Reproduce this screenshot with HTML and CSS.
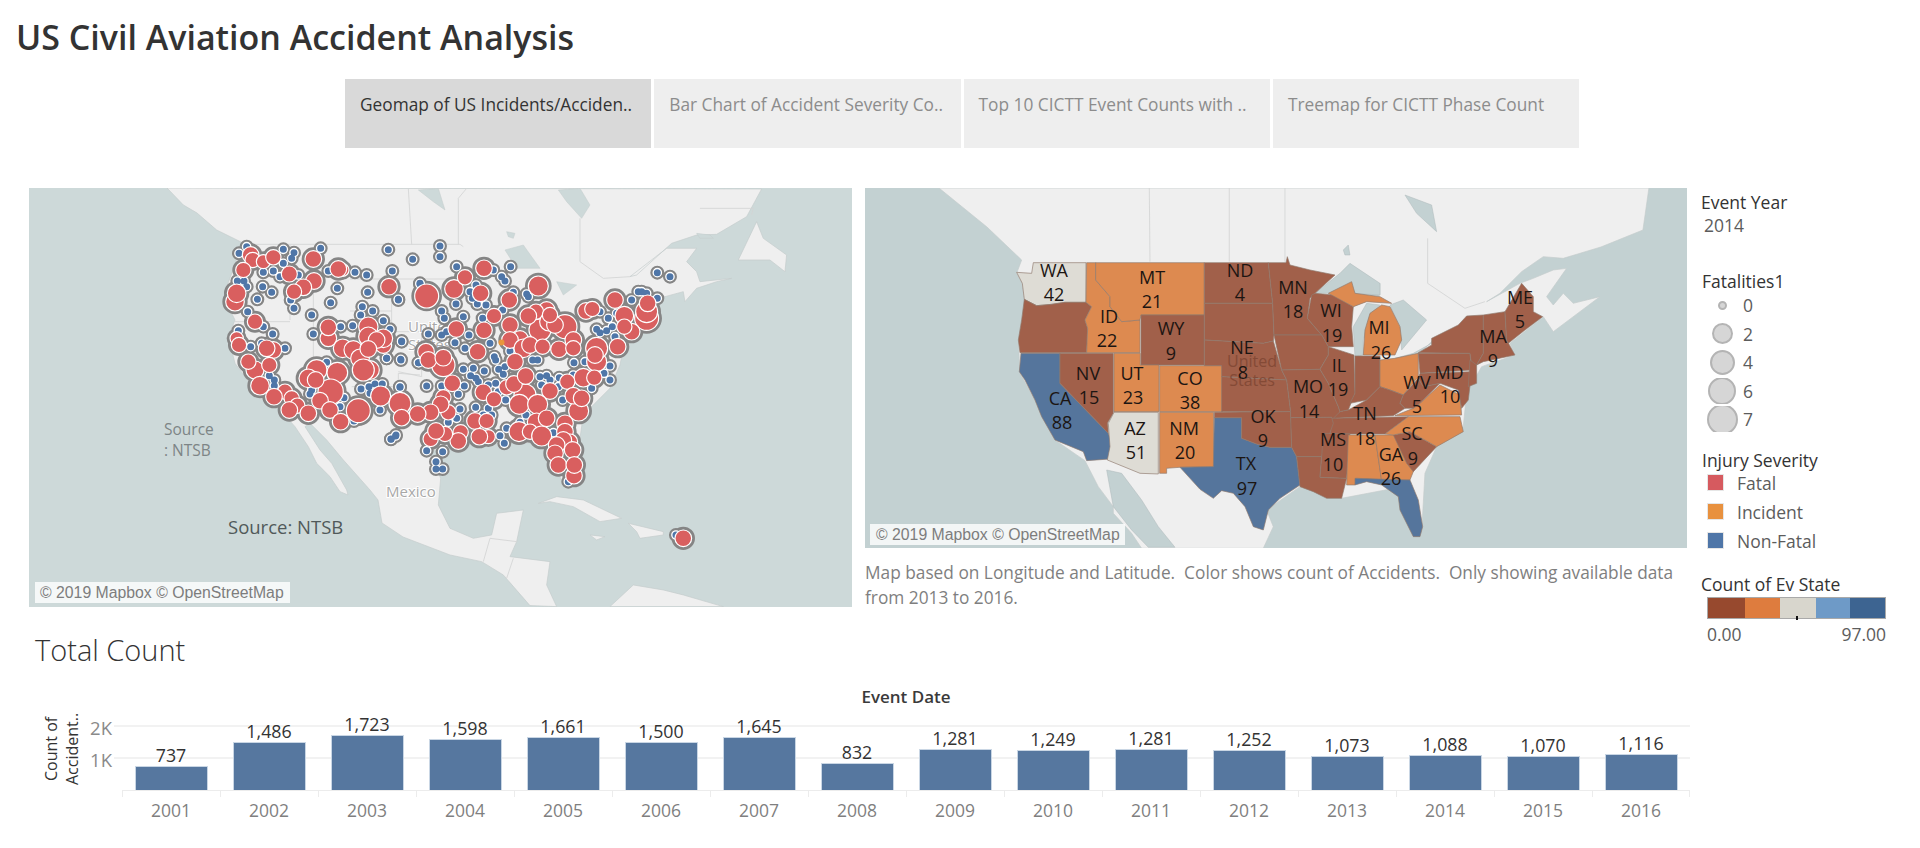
FILE: index.html
```html
<!DOCTYPE html>
<html lang="en">
<head>
<meta charset="utf-8">
<title>US Civil Aviation Accident Analysis</title>
<link rel="stylesheet" href="styles.css">
</head>
<body>
<div class="page">
  <h1 class="title">US Civil Aviation Accident Analysis</h1>
  <nav class="tabs">
    <div class="tab active">Geomap of US Incidents/Acciden..</div>
    <div class="tab">Bar Chart of Accident Severity Co..</div>
    <div class="tab">Top 10 CICTT Event Counts with ..</div>
    <div class="tab">Treemap for CICTT Phase Count</div>
  </nav>

  <section class="top">
    <div class="map map-one">
      <svg class="map-svg" viewBox="29 188 823 419" aria-label="Map of incidents">
        <defs>
          <path id="b7" transform="translate(220 230) scale(.3333)" d="M80 50h0M57 70h0M190 58h0M222 68h0M215 85h0M302 55h0M505 59h0M660 48h0M660 80h0M578 88h0M130 127h0M160 123h0M190 100h0M180 140h0M235 135h0M128 170h0M155 187h0M112 208h0M52 153h0M72 153h0M80 170h0M212 210h0M222 235h0M275 255h0M83 245h0M55 302h0M130 290h0M158 312h0M195 355h0M92 350h0M125 340h0M148 437h0M163 450h0M163 467h0M352 175h0M443 187h0M332 218h0M427 230h0M458 243h0M422 255h0M490 272h0M510 298h0M398 287h0M362 290h0M280 312h0M325 123h0M405 127h0M440 135h0M517 123h0M535 208h0M600 160h0M545 335h0M543 390h0M500 385h0M597 398h0M540 470h0M423 477h0M447 470h0M465 462h0M487 462h0M450 490h0M270 492h0M275 480h0M320 397h0M372 503h0M360 530h0M480 540h0M402 573h0M513 628h0M527 618h0"/>
          <path id="b12" transform="translate(350 185) scale(.3333)" d="M210 297h0M320 245h0M482 245h0M430 255h0M455 275h0M465 288h0M145 345h0M155 468h0M110 520h0M152 523h0M205 533h0M275 378h0M283 400h0M340 395h0M357 450h0M235 447h0M290 440h0M275 450h0M315 473h0M345 490h0M433 515h0M437 525h0M398 400h0M458 375h0M420 475h0M340 553h0M370 550h0M403 558h0M378 580h0M362 572h0M385 590h0M343 603h0M275 603h0M230 603h0M150 607h0M325 628h0M330 672h0M377 667h0M415 670h0M425 690h0M400 690h0M320 700h0M295 712h0M230 797h0M278 800h0M258 830h0M258 852h0M278 852h0M123 762h0M138 750h0M463 775h0M450 752h0M470 730h0M510 712h0M548 525h0M563 525h0M480 498h0M446 553h0M465 545h0M460 568h0M415 600h0M437 595h0M445 620h0M467 645h0M570 575h0M590 572h0M575 600h0M600 585h0M628 578h0M625 605h0M672 533h0M705 530h0M670 570h0M638 645h0M725 610h0M762 565h0M780 543h0M780 585h0M740 433h0M770 437h0M750 443h0M795 455h0M775 400h0M845 345h0M865 320h0M875 320h0M890 325h0M922 340h0M922 263h0M960 275h0M800 385h0M787 425h0M610 743h0M655 890h0M978 1050h0M750 380h0M530 327h0M535 335h0M490 322h0M360 320h0M378 300h0M367 340h0M382 357h0M408 360h0M318 357h0M528 690h0"/>
          <g id="r7" transform="translate(220 230) scale(.3333)">
            <circle cx="92" cy="75" r="25"/><circle cx="98" cy="90" r="23"/><circle cx="70" cy="120" r="23"/><circle cx="130" cy="95" r="21"/><circle cx="160" cy="82" r="23"/><circle cx="208" cy="132" r="24"/><circle cx="280" cy="87" r="25"/><circle cx="282" cy="153" r="25"/><circle cx="250" cy="172" r="25"/><circle cx="222" cy="185" r="23"/><circle cx="368" cy="120" r="19"/><circle cx="355" cy="117" r="25"/><circle cx="45" cy="215" r="28"/><circle cx="50" cy="190" r="28"/><circle cx="105" cy="275" r="23"/><circle cx="50" cy="325" r="20"/><circle cx="57" cy="345" r="23"/><circle cx="160" cy="360" r="25"/><circle cx="140" cy="355" r="25"/><circle cx="105" cy="420" r="27"/><circle cx="85" cy="395" r="23"/><circle cx="148" cy="405" r="23"/><circle cx="120" cy="467" r="28"/><circle cx="195" cy="485" r="23"/><circle cx="162" cy="500" r="25"/><circle cx="215" cy="505" r="23"/><circle cx="232" cy="527" r="23"/><circle cx="208" cy="540" r="25"/><circle cx="265" cy="550" r="25"/><circle cx="325" cy="325" r="25"/><circle cx="325" cy="292" r="25"/><circle cx="368" cy="355" r="28"/><circle cx="400" cy="360" r="28"/><circle cx="445" cy="290" r="29"/><circle cx="445" cy="320" r="29"/><circle cx="490" cy="345" r="25"/><circle cx="490" cy="325" r="28"/><circle cx="470" cy="330" r="25"/><circle cx="420" cy="385" r="28"/><circle cx="445" cy="357" r="25"/><circle cx="450" cy="420" r="28"/><circle cx="430" cy="420" r="33"/><circle cx="290" cy="420" r="31"/><circle cx="265" cy="445" r="28"/><circle cx="352" cy="428" r="31"/><circle cx="332" cy="485" r="38"/><circle cx="287" cy="450" r="25"/><circle cx="300" cy="512" r="25"/><circle cx="330" cy="540" r="25"/><circle cx="415" cy="542" r="36"/><circle cx="362" cy="575" r="25"/><circle cx="482" cy="498" r="30"/>
          </g>
          <g id="r12" transform="translate(350 185) scale(.3333)">
            <circle cx="117" cy="305" r="25"/><circle cx="230" cy="333" r="36"/><circle cx="312" cy="312" r="28"/><circle cx="345" cy="277" r="23"/><circle cx="402" cy="250" r="25"/><circle cx="392" cy="325" r="25"/><circle cx="478" cy="345" r="25"/><circle cx="432" cy="393" r="23"/><circle cx="565" cy="303" r="30"/><circle cx="319" cy="432" r="25"/><circle cx="402" cy="436" r="25"/><circle cx="383" cy="500" r="25"/><circle cx="480" cy="420" r="25"/><circle cx="645" cy="425" r="36"/><circle cx="570" cy="435" r="33"/><circle cx="590" cy="375" r="25"/><circle cx="558" cy="380" r="23"/><circle cx="535" cy="393" r="25"/><circle cx="597" cy="410" r="28"/><circle cx="615" cy="420" r="25"/><circle cx="600" cy="390" r="23"/><circle cx="510" cy="462" r="25"/><circle cx="480" cy="465" r="25"/><circle cx="520" cy="490" r="28"/><circle cx="540" cy="480" r="25"/><circle cx="495" cy="530" r="25"/><circle cx="578" cy="485" r="23"/><circle cx="627" cy="493" r="25"/><circle cx="670" cy="465" r="25"/><circle cx="670" cy="490" r="23"/><circle cx="708" cy="378" r="25"/><circle cx="727" cy="372" r="23"/><circle cx="795" cy="345" r="25"/><circle cx="890" cy="400" r="36"/><circle cx="890" cy="380" r="33"/><circle cx="893" cy="355" r="25"/><circle cx="845" cy="440" r="25"/><circle cx="823" cy="392" r="28"/><circle cx="823" cy="425" r="23"/><circle cx="803" cy="485" r="25"/><circle cx="740" cy="530" r="30"/><circle cx="740" cy="490" r="33"/><circle cx="735" cy="510" r="25"/><circle cx="700" cy="578" r="28"/><circle cx="733" cy="578" r="23"/><circle cx="652" cy="590" r="23"/><circle cx="686" cy="678" r="30"/><circle cx="670" cy="632" r="25"/><circle cx="695" cy="640" r="25"/><circle cx="600" cy="618" r="25"/><circle cx="525" cy="630" r="33"/><circle cx="470" cy="607" r="23"/><circle cx="492" cy="597" r="25"/><circle cx="527" cy="573" r="25"/><circle cx="400" cy="622" r="25"/><circle cx="432" cy="643" r="23"/><circle cx="508" cy="658" r="30"/><circle cx="563" cy="658" r="30"/><circle cx="560" cy="712" r="28"/><circle cx="590" cy="700" r="25"/><circle cx="507" cy="740" r="30"/><circle cx="540" cy="740" r="23"/><circle cx="575" cy="753" r="30"/><circle cx="645" cy="715" r="25"/><circle cx="645" cy="740" r="25"/><circle cx="660" cy="770" r="23"/><circle cx="640" cy="765" r="25"/><circle cx="620" cy="780" r="25"/><circle cx="615" cy="805" r="25"/><circle cx="668" cy="795" r="25"/><circle cx="672" cy="872" r="25"/><circle cx="625" cy="840" r="25"/><circle cx="673" cy="840" r="25"/><circle cx="375" cy="708" r="25"/><circle cx="410" cy="708" r="23"/><circle cx="415" cy="755" r="21"/><circle cx="388" cy="755" r="25"/><circle cx="332" cy="742" r="23"/><circle cx="325" cy="768" r="25"/><circle cx="285" cy="747" r="23"/><circle cx="242" cy="762" r="23"/><circle cx="258" cy="738" r="25"/><circle cx="295" cy="682" r="23"/><circle cx="280" cy="637" r="23"/><circle cx="272" cy="658" r="25"/><circle cx="242" cy="682" r="25"/><circle cx="203" cy="687" r="25"/><circle cx="150" cy="655" r="33"/><circle cx="155" cy="698" r="25"/><circle cx="280" cy="540" r="35"/><circle cx="228" cy="500" r="25"/><circle cx="235" cy="525" r="25"/><circle cx="280" cy="518" r="25"/><circle cx="307" cy="595" r="25"/><circle cx="1000" cy="1060" r="25"/>
          </g>
        </defs>

        <g transform="translate(350 185) scale(.3333)">
          <path class="land" d="M-549 9L-500 60-459 84-400 135-327 171-345 240-370 305-375 345-345 405-365 455-345 535-315 575-280 625-210 675-165 725-125 785-100 835-60 875-30 920-6 930-10 915-55 835-90 795-135 725-120 715-70 765-20 825 60 915 84 945 96 1014 159 1056 300 1110 395 1130 460 1170 540 1262 620 1265 590 1200 600 1130 480 1115 500 1070 520 975 440 985 425 1050 370 1060 300 1030 265 960 272 880 240 800 320 775 400 780 480 770 560 775 590 800 640 895 690 880 690 760 700 690 780 610 810 540 830 440 920 420 890 350 1000 320 1005 350 1040 310 1100 290 1145 280 1050 290 1040 260 1010 230 1040 190 950 190 840 275 860 270 965 175 1040 150 1100 148 1190 95 1235 12Z"/>
          <path class="land" d="M1165 225L1220 110 1240 160 1310 210 1305 260 1260 225ZM565 955L620 935 700 945 815 1000 750 1010 670 965 600 950ZM835 1015L940 1040 940 1050 870 1060 860 1040ZM720 1050L765 1055 740 1065ZM780 1265L850 1200 940 1215 1000 1230 1120 1265Z"/>
          <path class="lake" d="M625 15L690 10 720 60 695 100 650 50ZM205 15L265 10 285 75 250 50ZM465 195L520 180 570 250 500 250ZM620 290L680 300 640 330ZM470 140L495 145 490 160 475 155ZM1040 145L1080 150 1090 160 1050 160Z"/>
          <path class="line" d="M-327 178L330 178 340 185M175 10L185 178M325 40L325 178M350 10L325 40M690 100L690 230 760 280 840 275M0 282L295 282M0 378L125 378M125 295L125 440M140 440L215 440 215 575 145 560M400 1130L420 1060 500 1070M490 1120L470 1180M1050 70L1210 70 1205 90"/>
          <path class="line" d="M-180 180L-180 405M-110 315L-110 520M-345 410L-180 410M-110 520L0 520M5 605L145 605 145 565 210 570"/>
        </g>

        <text class="map-name" x="408" y="332">United</text>
        <text class="map-name" x="408" y="350">States</text>
        <text class="map-name" x="386" y="497">Mexico</text>
        <text class="map-note" x="164" y="435">Source</text>
        <text class="map-note" x="164" y="456">: NTSB</text>
        <text class="map-source" x="228" y="534">Source: NTSB</text>

        <use href="#b7" class="blue-halo"/>
        <use href="#b12" class="blue-halo"/>
        <use href="#r7" class="red-halo"/>
        <use href="#r12" class="red-halo"/>
        <use href="#b7" class="blue-ring"/>
        <use href="#b12" class="blue-ring"/>
        <use href="#b7" class="blue-dot"/>
        <use href="#b12" class="blue-dot"/>
        <use href="#r7" class="red-dot"/>
        <use href="#r12" class="red-dot"/>
        <circle class="orange-dot" cx="501.500" cy="342.500" r="3"/>
      </svg>
      <div class="attribution attribution-one">© 2019 Mapbox © OpenStreetMap</div>
    </div>

    <div class="map-column">
      <div class="map map-two">
        <svg class="map-svg" viewBox="865 188 822 360" aria-label="Map of accident counts by state">
          <g transform="translate(865 240) scale(.3333)">
            <path class="land" d="M222 -156L366 -39 470 60 455 100 472 130 478 178 470 240 460 300 465 400 510 480 530 530 570 600 660 662 700 740 745 800 745 820 800 880 830 925 1195 925 1225 860 1205 810 1305 740 1430 775 1640 735 1670 880 1680 700 1715 620 1795 560 1805 460 1850 380 1950 345 1935 310 2035 230 2065 275 2205 170 2125 190 2095 160 2065 195 2045 170 2105 85 2065 90 2005 115 1965 130 1865 185 1905 160 1970 95 2035 50 2095 55 2208 21 2334 -30 2352 -156Z"/>
            <path class="gulf" d="M725 690L770 700 830 780 880 860 930 922 850 922 800 870 745 800Z"/>
            <path class="gulf" d="M1350 340L1425 260 1455 190 1545 130 1545 165 1465 200 1500 160 1405 160ZM1465 260L1505 190 1545 195 1515 225 1495 300 1495 345 1470 350ZM1575 195L1615 180 1685 240 1610 330 1605 260ZM1590 355L1645 340 1700 310 1780 260 1775 285 1705 300 1665 340ZM1435 30L1450 15 1455 45 1440 45Z"/>
            <path class="gulf" d="M1350 160L1425 100 1455 70 1545 130 1545 165 1470 160 1455 130 1395 160ZM1620 -135L1700 -105 1715 -25 1655 -80Z"/>
            <path class="line" d="M853 -156L855 65M1093 -156L1093 65M1260 -156L1260 65M1688 -5L1688 130 1800 205 1860 185"/>

            <path class="state beige" d="M505 68L663 68 663 187 600 187 560 193 515 197 478 178 472 130 455 97 500 100Z"/>
            <path class="state brown" d="M478 178L515 197 560 193 600 187 663 187 680 200 660 240 668 265 665 338 465 338 460 300 470 240Z"/>
            <path class="state blue" d="M468 340L585 340 585 430 730 580 740 610 735 657 665 662 655 635 570 600 530 530 510 480 480 420 463 395Z"/>
            <path class="state brown" d="M585 340L745 340 745 520 728 548 730 580 585 430Z"/>
            <path class="state orange" d="M665 68L692 68 692 120 735 170 735 200 770 245 825 240 825 338 665 338 668 265 660 240 680 200 663 187Z"/>
            <path class="state orange" d="M692 68L1018 68 1018 225 828 225 825 240 770 245 735 200 735 170 692 120Z"/>
            <path class="state brown" d="M828 225L1018 225 1018 375 828 375Z"/>
            <path class="state orange" d="M747 340L826 340 826 375 882 375 882 515 747 515Z"/>
            <path class="state orange" d="M884 377L1072 377 1072 515 884 515Z"/>
            <path class="state beige" d="M747 517L880 517 880 702 825 700 727 660 735 620 730 550Z"/>
            <path class="state orange" d="M884 517L1046 517 1046 680 945 682 905 685 905 700 884 700Z"/>
          </g>
          <g transform="translate(1200 240) scale(.3333)">
            <path class="state blue" d="M43 533L125 533 125 595 170 612 210 622 275 622 290 650 300 735 240 775 205 810 190 870 160 860 135 800 100 760 65 752 40 775 0 748 -60 682 40 680Z"/>
            <path class="state brown" d="M13 68L205 68 218 190 13 190Z"/>
            <path class="state brown" d="M13 190L218 190 222 285 220 303 190 310 13 300Z"/>
            <path class="state brown" d="M13 300L190 310 220 303 245 390 260 420 65 410 65 377 13 377Z"/>
            <path class="state brown" d="M65 410L260 420 272 515 65 515Z"/>
            <path class="state brown" d="M43 517L272 515 275 622 210 622 170 612 125 595 125 533 43 533Z"/>
            <path class="state brown" d="M205 68L258 68 262 50 270 75 330 90 405 105 345 160 330 175 322 235 365 285 222 285 218 190Z"/>
            <path class="state brown" d="M335 165L345 160 400 165 460 200 455 260 460 320 385 320 365 285 322 235Z"/>
            <path class="state brown" d="M222 285L365 285 385 320 385 345 360 388 245 390Z"/>
            <path class="state brown" d="M245 390L360 388 385 430 415 500 420 515 400 550 395 532 272 533 272 515 260 420Z"/>
            <path class="state brown" d="M385 320L462 345 465 460 445 510 420 515 415 500 385 430 360 388 385 345Z"/>
            <path class="state brown" d="M465 348L540 348 540 440 500 480 450 490 465 460Z"/>
            <path class="state orange" d="M490 345L495 270 510 220 545 195 570 200 600 260 605 300 585 345Z"/>
            <path class="state orange" d="M385 160L455 125 465 160 540 170 575 190 500 185 460 200Z"/>
            <path class="state orange" d="M540 360L585 355 655 340 655 410 610 465 570 450 540 440Z"/>
            <path class="state brown" d="M420 515L445 510 500 480 540 440 570 450 610 465 600 490 615 505 580 527 400 535Z"/>
            <path class="state brown" d="M395 535L625 530 555 582 405 582 390 580Z"/>
            <path class="state brown" d="M272 533L395 532 400 550 365 650 290 650 275 622Z"/>
            <path class="state brown" d="M290 650L365 650 360 712 440 715 425 775 380 775 340 755 300 740Z"/>
            <path class="state brown" d="M370 580L450 582 440 715 360 712 365 650Z"/>
            <path class="state orange" d="M445 585L525 585 545 720 470 715 465 735 440 735Z"/>
            <path class="state orange" d="M525 585L580 585 650 670 630 720 545 725Z"/>
            <path class="state brown" d="M580 585L630 575 710 620 640 695 620 670Z"/>
            <path class="state orange" d="M555 582L625 530 780 530 790 575 710 620 630 575 580 585Z"/>
            <path class="state orange" d="M585 527L640 505 660 490 720 435 780 465 785 525Z"/>
            <path class="state brown" d="M610 465L655 415 670 440 720 430 660 490 640 505 615 505 600 490Z"/>
            <path class="state brown" d="M655 340L810 340 815 390 660 400Z"/>
            <path class="state brown" d="M660 400L815 395 805 480 785 505 775 450 720 430 670 440 655 415Z"/>
            <path class="state brown" d="M655 338L695 315 695 295 775 255 800 228 850 225 850 340 830 375 815 375 810 340Z"/>
            <path class="state brown" d="M810 360L830 375 830 430 805 440Z"/>
            <path class="state brown" d="M850 225L915 215 920 300 945 345 850 365 830 375 850 340Z"/>
            <path class="state brown" d="M915 215L965 130 1000 170 1000 215 1028 230 975 270 925 310 920 300Z"/>
            <path class="state blue" d="M465 715L630 720 655 780 668 860 660 890 640 890 600 810 595 770 545 735 500 725 465 735Z"/>
          </g>

          <text class="map-state-name" x="1252" y="367">United</text>
          <text class="map-state-name" x="1252" y="386">States</text>

          <g class="labels">
            <text x="1054" y="277">WA</text><text x="1054" y="301">42</text>
            <text x="1152" y="284">MT</text><text x="1152" y="308">21</text>
            <text x="1109" y="323">ID</text><text x="1107" y="347">22</text>
            <text x="1171" y="335">WY</text><text x="1171" y="360">9</text>
            <text x="1088" y="380">NV</text><text x="1089" y="404">15</text>
            <text x="1060" y="405">CA</text><text x="1062" y="429">88</text>
            <text x="1132" y="380">UT</text><text x="1133" y="404">23</text>
            <text x="1190" y="385">CO</text><text x="1190" y="409">38</text>
            <text x="1135" y="435">AZ</text><text x="1136" y="459">51</text>
            <text x="1184" y="435">NM</text><text x="1185" y="459">20</text>
            <text x="1240" y="277">ND</text><text x="1240" y="301">4</text>
            <text x="1293" y="294">MN</text><text x="1293" y="318">18</text>
            <text x="1331" y="317">WI</text><text x="1332" y="342">19</text>
            <text x="1242" y="354">NE</text><text x="1243" y="379">8</text>
            <text x="1379" y="334">MI</text><text x="1381" y="359">26</text>
            <text x="1520" y="304">ME</text><text x="1520" y="328">5</text>
            <text x="1493" y="343">MA</text><text x="1493" y="367">9</text>
            <text x="1339" y="372">IL</text><text x="1338" y="396">19</text>
            <text x="1308" y="393">MO</text><text x="1309" y="418">14</text>
            <text x="1263" y="423">OK</text><text x="1263" y="447">9</text>
            <text x="1246" y="470">TX</text><text x="1247" y="495">97</text>
            <text x="1333" y="446">MS</text><text x="1333" y="471">10</text>
            <text x="1365" y="420">TN</text><text x="1365" y="445">18</text>
            <text x="1449" y="379">MD</text><text x="1450" y="403">10</text>
            <text x="1417" y="389">WV</text><text x="1417" y="413">5</text>
            <text x="1412" y="440">SC</text><text x="1413" y="465">9</text>
            <text x="1391" y="461">GA</text><text x="1391" y="485">26</text>
          </g>
        </svg>
        <div class="attribution attribution-two">© 2019 Mapbox © OpenStreetMap</div>
      </div>
      <p class="caption">Map based on Longitude and Latitude.&nbsp; Color shows count of Accidents.&nbsp; Only showing available data<br>from 2013 to 2016.</p>
    </div>

    <aside class="legend">
      <h2 class="legend-title year-title">Event Year</h2>
      <div class="year-value">2014</div>

      <h2 class="legend-title fatal-title">Fatalities1</h2>
      <div class="size-list">
        <div class="size-row"><span class="size-slot"><i class="bubble b0"></i></span><span>0</span></div>
        <div class="size-row"><span class="size-slot"><i class="bubble b2"></i></span><span>2</span></div>
        <div class="size-row"><span class="size-slot"><i class="bubble b4"></i></span><span>4</span></div>
        <div class="size-row"><span class="size-slot"><i class="bubble b6"></i></span><span>6</span></div>
        <div class="size-row"><span class="size-slot"><i class="bubble b7"></i></span><span>7</span></div>
      </div>

      <h2 class="legend-title injury-title">Injury Severity</h2>
      <div class="swatch-list">
        <div class="swatch-row"><i class="swatch fatal"></i>Fatal</div>
        <div class="swatch-row"><i class="swatch incident"></i>Incident</div>
        <div class="swatch-row"><i class="swatch nonfatal"></i>Non-Fatal</div>
      </div>

      <h2 class="legend-title count-title">Count of Ev State</h2>
      <div class="ramp"><i class="r1"></i><i class="r2"></i><i class="r3"></i><i class="r4"></i><i class="r5"></i><b class="ramp-tick"></b></div>
      <div class="ramp-labels"><span>0.00</span><span>97.00</span></div>
    </aside>
  </section>

  <h2 class="total">Total Count</h2>
  <div class="axis-title">Event Date</div>
  <div class="chart">
    <div class="y-title">Count of<br>Accident..</div>
    <div class="y-axis"><span class="y2">2K</span><span class="y1">1K</span></div>
    <div class="plot">
      <i class="gridline g2"></i><i class="gridline g1"></i>
      <div class="col"><span>737</span><i class="bar" style="height:23.6px"></i></div>
      <div class="col"><span>1,486</span><i class="bar" style="height:47.6px"></i></div>
      <div class="col"><span>1,723</span><i class="bar" style="height:55.1px"></i></div>
      <div class="col"><span>1,598</span><i class="bar" style="height:51.1px"></i></div>
      <div class="col"><span>1,661</span><i class="bar" style="height:53.2px"></i></div>
      <div class="col"><span>1,500</span><i class="bar" style="height:48px"></i></div>
      <div class="col"><span>1,645</span><i class="bar" style="height:52.6px"></i></div>
      <div class="col"><span>832</span><i class="bar" style="height:26.6px"></i></div>
      <div class="col"><span>1,281</span><i class="bar" style="height:41px"></i></div>
      <div class="col"><span>1,249</span><i class="bar" style="height:40px"></i></div>
      <div class="col"><span>1,281</span><i class="bar" style="height:41px"></i></div>
      <div class="col"><span>1,252</span><i class="bar" style="height:40.1px"></i></div>
      <div class="col"><span>1,073</span><i class="bar" style="height:34.3px"></i></div>
      <div class="col"><span>1,088</span><i class="bar" style="height:34.8px"></i></div>
      <div class="col"><span>1,070</span><i class="bar" style="height:34.2px"></i></div>
      <div class="col"><span>1,116</span><i class="bar" style="height:35.7px"></i></div>
    </div>
  </div>
  <div class="years">
    <span>2001</span><span>2002</span><span>2003</span><span>2004</span><span>2005</span><span>2006</span><span>2007</span><span>2008</span><span>2009</span><span>2010</span><span>2011</span><span>2012</span><span>2013</span><span>2014</span><span>2015</span><span>2016</span>
  </div>
</div>
</body>
</html>
```
FILE: styles.css
```css
* { box-sizing: border-box; }
html, body { margin: 0; padding: 0; background: #fff; }
body { font-family: "Open Sans", "Noto Sans", sans-serif; color: #333; overflow: hidden; }
.page { width: 1920px; height: 848px; overflow: hidden; }

.title { margin: 0; height: 79px; padding: 16px 0 0 16px; font-size: 34px; line-height: 42px; font-weight: 600; color: #333; white-space: nowrap; }

.tabs { display: flex; gap: 3px; height: 69px; margin-left: 345px; }
.tab { width: 306.300px; height: 69px; padding: 13px 15px; font-size: 17.300px; line-height: 26px; white-space: nowrap; overflow: hidden; background: #eeeeee; color: #8c8c8c; }
.tab.active { background: #d9d9d9; color: #333; }

.top { display: flex; align-items: flex-start; gap: 13px; height: 419px; margin-top: 40px; padding-left: 29px; }
.map { position: relative; background: #cdd9d9; }
.map-one { width: 823px; height: 419px; }
.map-column { width: 822px; }
.map-two { width: 822px; height: 360px; background: #c3d1d2; }
.map-svg { display: block; width: 100%; height: 100%; }
.map-one .land, .map-two .land { fill: #efefef; stroke: #c4cccc; stroke-width: 2; }
.map-one .lake { fill: #cdd9d9; stroke: #c4cccc; stroke-width: 1.500; }
.map-two .gulf { fill: #c3d1d2; stroke: #aeb9ba; stroke-width: 1.500; }
.line { fill: none; stroke: #d2d4d4; stroke-width: 2.500; }

.state { stroke: #8f7a6e; stroke-width: 2; stroke-linejoin: round; }
.state.brown { fill: #a1604a; }
.state.orange { fill: #dd8a50; }
.state.beige { fill: #dedcd5; }
.state.blue { fill: #55759c; }

.labels text { font-size: 18px; text-anchor: middle; fill: #1c1512; }
.map-name { font-size: 15px; fill: #a8a8a8; paint-order: stroke; stroke: #fff; stroke-width: 2px; }
.map-state-name { font-size: 16px; text-anchor: middle; fill: #7b4330; opacity: .75; }
.map-note { font-size: 15.500px; fill: #7d8586; }
.map-source { font-size: 18.500px; fill: #51595a; }

.blue-halo, .blue-ring, .blue-dot { fill: none; stroke-linecap: round; }
.blue-halo { stroke: #858585; stroke-width: 42; }
.blue-ring { stroke: #fff; stroke-width: 29; }
.blue-dot { stroke: #4f76a8; stroke-width: 21; }
.red-halo { fill: #858585; stroke: #858585; stroke-width: 20; }
.red-dot { fill: #d95f5f; stroke: #fff; stroke-width: 3.500; }
.orange-dot { fill: #e8963c; }

.attribution { position: absolute; font-family: "Liberation Sans", Arial, sans-serif; font-size: 15.800px; line-height: 21px; color: #7d7d7d; background: rgba(255, 255, 255, .8); white-space: nowrap; }
.attribution-one { left: 6px; top: 394px; width: 255px; padding-left: 5px; }
.attribution-two { left: 5px; top: 336px; width: 255px; padding-left: 6px; }

.caption { margin: 12px 0 0; font-size: 17.300px; line-height: 25px; color: #7f7f7f; white-space: nowrap; }

.legend { width: 190px; margin-left: 1px; font-size: 17.500px; color: #5c5c5c; }
.legend-title { margin: 0; font-size: 17.500px; line-height: 24px; font-weight: 400; color: #333; white-space: nowrap; }
.year-title { margin-top: 2px; }
.year-value { margin-left: 3px; line-height: 22px; }
.fatal-title { margin-top: 33px; margin-left: 1px; }
.size-list { display: flex; flex-direction: column; gap: 2.500px; margin-top: -1px; }
.size-row { display: flex; align-items: center; height: 26px; overflow: hidden; line-height: 26px; }
.size-slot { display: flex; justify-content: center; align-items: center; flex: none; width: 42px; height: 26px; }
.bubble { display: block; flex: none; border-radius: 50%; background: #d6d6d6; border: 2px solid #b4b4b4; }
.b0 { width: 9px; height: 9px; }
.b2 { width: 21px; height: 21px; }
.b4 { width: 25px; height: 25px; }
.b6 { width: 28px; height: 28px; }
.b7 { width: 31px; height: 31px; }
.injury-title { margin-top: 16px; margin-left: 1px; }
.swatch-list { display: flex; flex-direction: column; gap: 12px; margin-top: 2px; margin-left: 6px; }
.swatch-row { display: flex; align-items: center; gap: 13px; height: 17px; white-space: nowrap; }
.swatch { display: block; width: 17px; height: 17px; border: 1px solid rgba(255, 255, 255, .45); outline: 1px solid #e6e6e6; outline-offset: -1px; }
.fatal { background: #d65a5f; }
.incident { background: #e8913f; }
.nonfatal { background: #4f76a8; }
.count-title { margin-top: 23px; }
.ramp { position: relative; display: flex; width: 179px; height: 22px; margin-left: 6px; margin-top: 1px; border: 1px solid #a9a9a9; }
.ramp i { display: block; height: 100%; }
.r1 { width: 37px; background: #97492e; }
.r2 { width: 35px; background: #de7c3e; }
.r3 { width: 36px; background: #d8d6cd; }
.r4 { width: 34px; background: #6e9ac7; }
.r5 { flex: 1; background: #3d6491; }
.ramp-tick { position: absolute; left: 88px; bottom: -2px; width: 2px; height: 4px; background: #111; }
.ramp-labels { display: flex; justify-content: space-between; width: 179px; margin-left: 6px; margin-top: 4px; line-height: 22px; }

.total { margin: 23px 0 0 35px; height: 40px; font-size: 29px; line-height: 40px; font-weight: 300; color: #333; }
.axis-title { margin-top: 17px; height: 20px; padding-left: 122px; width: 1690px; font-size: 17px; line-height: 20px; font-weight: 600; text-align: center; color: #3a3a3a; }

.chart { display: flex; height: 84px; padding-left: 41px; }
.y-title { flex: none; width: 44px; writing-mode: vertical-rl; transform: rotate(180deg); text-align: center; font-size: 16px; line-height: 21px; white-space: nowrap; color: #333; height: 84px; }
.y-axis { position: relative; flex: none; width: 37px; color: #8a8a8a; font-size: 18.500px; }
.y-axis span { position: absolute; right: 10px; line-height: 20px; }
.y2 { bottom: 53px; }
.y1 { bottom: 21px; }
.plot { position: relative; display: flex; align-items: flex-end; width: 1568px; height: 84px; border-bottom: 1px solid #ececec; }
.gridline { position: absolute; left: -8px; right: 0; height: 2px; background: #f2f2f2; }
.g2 { bottom: 63px; }
.g1 { bottom: 31px; }
.col { position: relative; display: flex; flex-direction: column; align-items: center; justify-content: flex-end; width: 98px; font-size: 17.800px; color: #333; }
.col span { line-height: 20px; margin-bottom: 1px; }
.bar { display: block; width: 73px; background: #56779f; border: 1px solid #c9d6e4; border-bottom: 0; }

.years { display: flex; margin-left: 122px; width: 1568px; height: 31px; }
.years span { flex: none; width: 98px; padding-top: 8px; font-size: 17.500px; line-height: 22px; text-align: center; color: #7f7f7f; background: linear-gradient(#ececec, #ececec) left top / 1px 6px no-repeat; }
.years span:last-child { background: linear-gradient(#ececec, #ececec) left top / 1px 6px no-repeat, linear-gradient(#ececec, #ececec) right top / 1px 6px no-repeat; }
```
